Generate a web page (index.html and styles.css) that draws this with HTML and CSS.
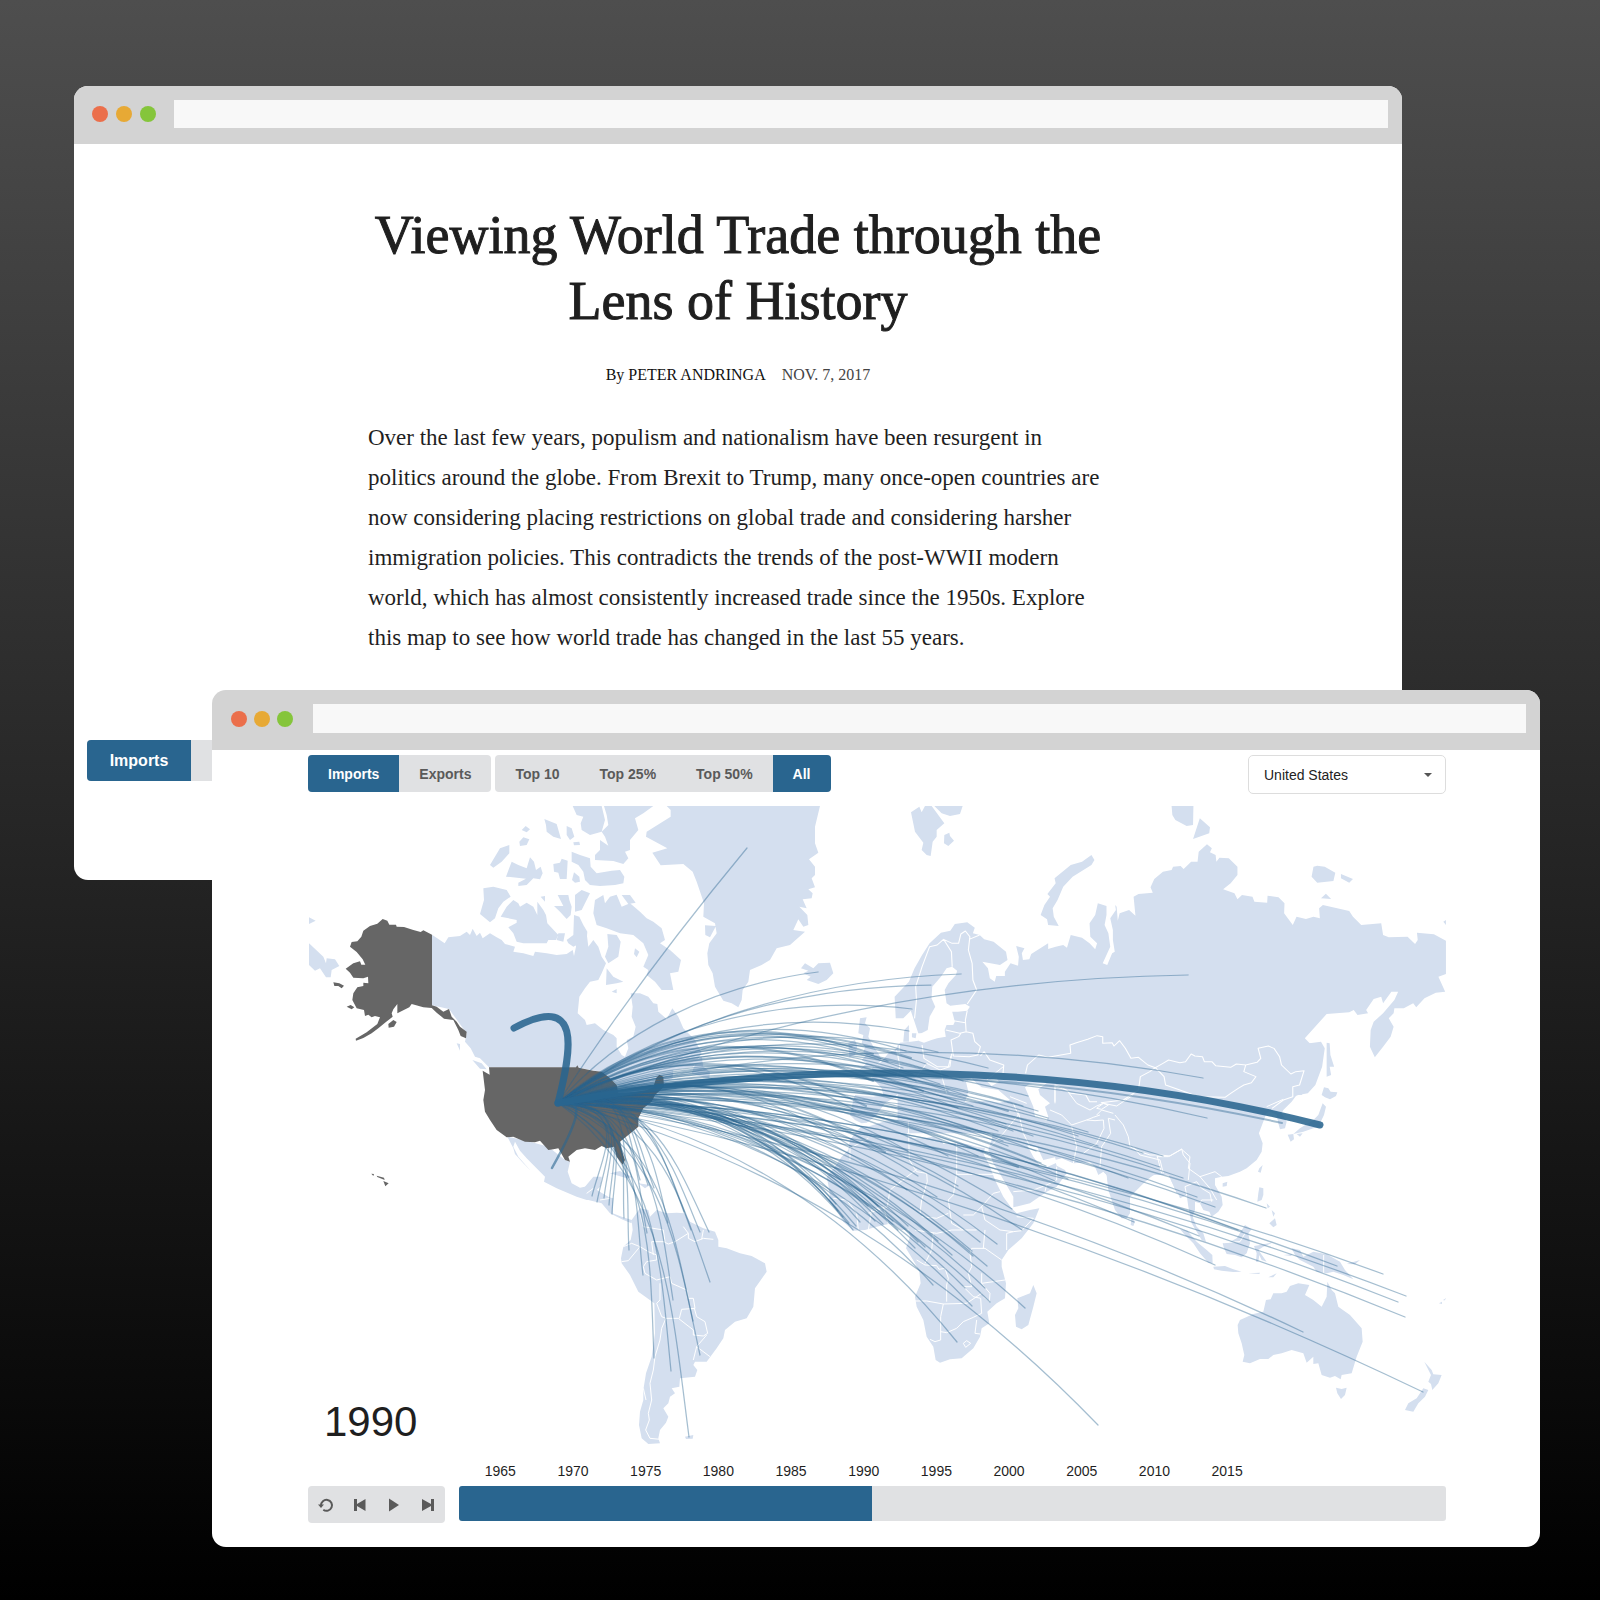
FILE: index.html
```html
<!DOCTYPE html>
<html lang="en">
<head>
<meta charset="utf-8">
<meta name="viewport" content="width=device-width, initial-scale=1">
<title>Viewing World Trade through the Lens of History</title>
<link rel="stylesheet" href="styles.css">
</head>
<body>
<main class="desktop">

  <section class="window window-article">
    <div class="chrome">
      <div class="dots"><span class="dot red"></span><span class="dot amber"></span><span class="dot green"></span></div>
      <input class="address" type="text" aria-label="Address">
    </div>
    <article class="article">
      <h1>Viewing World Trade through the Lens of History</h1>
      <p class="byline"><span class="author">By PETER ANDRINGA</span><time datetime="2017-11-07">NOV. 7, 2017</time></p>
      <p class="intro">Over the last few years, populism and nationalism have been resurgent in<br>politics around the globe. From Brexit to Trump, many once-open countries are<br>now considering placing restrictions on global trade and considering harsher<br>immigration policies. This contradicts the trends of the post-WWII modern<br>world, which has almost consistently increased trade since the 1950s. Explore<br>this map to see how world trade has changed in the last 55 years.</p>
    </article>
    <div class="segmented large">
      <button class="active" type="button">Imports</button><button type="button" aria-label="Exports"></button>
    </div>
  </section>

  <section class="window window-map">
    <div class="chrome chrome-map">
      <div class="dots"><span class="dot red"></span><span class="dot amber"></span><span class="dot green"></span></div>
      <input class="address" type="text" aria-label="Address">
    </div>
    <div class="explorer">
      <div class="toolbar">
        <div class="segmented">
          <button class="active" type="button">Imports</button><button type="button">Exports</button>
        </div>
        <div class="segmented">
          <button type="button">Top 10</button><button type="button">Top 25%</button><button type="button">Top 50%</button><button class="active" type="button">All</button>
        </div>
        <div class="country">
          <select aria-label="Country"><option>United States</option></select>
        </div>
      </div>

      <div class="map">
        <svg viewBox="0 0 1138 638" role="img" aria-label="World trade routes">
          <g transform="scale(.33333)">
            <!-- Russia, Scandinavia, Arctic Asia -->
            <g transform="translate(1656 -18) scale(1.129 1)">
              <path class="land" d="M95,655 92,590 130,545 145,505 165,465 185,430 215,398 240,392 252,372 285,367 305,383 300,400 318,405 330,418 355,425 388,455 392,480 372,495 325,485 340,505 345,535 358,545 362,528 385,528 385,515 400,490 420,497 422,470 415,438 437,445 430,460 433,480 450,478 455,462 500,430 500,447 520,440 540,435 550,443 560,405 590,413 610,430 625,448 630,430 612,410 610,370 625,345 632,310 655,318 655,345 650,375 660,400 665,440 645,490 657,495 670,460 677,455 672,420 672,390 665,355 680,330 678,315 682,320 685,362 690,340 715,330 732,347 727,290 740,282 778,278 772,262 782,237 805,215 828,210 832,200 852,198 860,207 880,185 897,185 900,155 922,133 935,145 930,157 945,165 947,185 955,173 980,175 1003,200 1003,225 985,250 965,268 995,280 1003,298 1015,285 1043,290 1048,305 1082,308 1083,287 1112,292 1128,310 1127,340 1150,375 1160,350 1185,357 1205,350 1222,355 1220,325 1230,315 1300,333 1310,350 1332,375 1385,370 1390,405 1405,412 1455,410 1475,432 1482,420 1480,398 1525,403 1557,422 1557,522 1537,530 1555,575 1530,578 1500,595 1478,622 1470,610 1445,625 1420,625 1418,640 1405,655 1418,680 1410,710 1390,740 1368,772 1355,740 1357,690 1365,665 1390,640 1420,600 1430,575 1412,575 1390,610 1385,590 1365,597 1345,630 1350,640 1322,645 1312,630 1300,637 1240,642 1182,715 1195,730 1225,725 1235,745 1228,800 1210,855 1190,880 1165,885 1150,890 1130,905 1100,925 1080,940 1060,1000 100,1000 100,735 135,725 155,722 165,700 155,700 135,632 115,655z"/>
              <path class="land" d="M480,345 490,315 505,290 498,282 520,250 517,235 560,195 590,185 615,165 623,180 615,195 565,230 540,260 525,300 512,325 515,350 528,378 500,375 497,358zM828,18H886L885,75 868,78 838,60 830,45zM903,55 930,82 928,100 885,117zM1200,230 1205,200 1215,197 1235,200 1263,218 1258,243 1215,248zM1278,222 1310,237 1300,248 1278,235zM1225,295 1238,281 1252,297zM1550,365 1557,360V375zM1240,728 1248,730 1250,765 1260,800 1248,800 1252,825 1240,830 1240,790zM118,690 130,675 130,725 115,725zM138,700 150,700 148,715 138,712z"/>
              <path class="sea" d="M158,703 180,690 185,650 200,620 190,595 192,560 215,530 230,505 245,500 258,512 255,525 235,550 225,570 230,610 240,617 280,612 292,620 285,632 260,635 245,635 252,665 248,675 230,675 225,690 228,710 205,715 190,720 170,728 155,722z"/>
            </g>
            <!-- Europe, Middle East, India, Africa -->
            <g transform="translate(1476 582)">
              <path class="land" d="M330,125 300,128 285,150 265,160 245,185 215,205 225,225 215,232 245,265 250,285 220,290 165,285 160,300 150,345 165,360 185,370 200,368 225,350 240,330 255,310 280,295 300,275 330,278 345,262 360,300 375,310 400,340 395,355 415,345 420,325 385,295 360,265 350,250 370,245 380,265 430,310 440,340 455,375 470,370 465,345 480,335 495,345 490,365 510,378 555,378 580,380 575,420 565,450 580,490 605,530 640,590 640,622 690,610 740,575 770,560 800,520 795,510 770,497 765,480 785,475 820,490 870,487 885,500 895,525 910,515 920,525 925,570 945,630 965,655 980,655 990,640 990,590 1030,550 1060,525 1090,525 1110,520 1115,545 1130,580 1165,580 1200,560V135H345zM180,55 200,52 195,70 210,85 205,110 220,140 235,160 245,180 225,200 190,205 178,210 200,190 185,180 200,165 190,160 195,140 185,130 190,105 175,100zM145,130 165,120 172,140 165,165 148,172zM375,350 395,352 390,362zM305,305H316V332H305z"/>
              <path class="land" d="M185,378 165,400 150,420 145,450 125,470 105,500 80,530 85,555 90,590 85,600 105,625 130,665 160,692 195,690 230,680 265,672 285,675 305,690 325,688 330,710 318,745 345,790 358,815 362,850 345,890 350,920 370,960 380,1010 400,1040 407,1080 420,1088 450,1078 485,1075 520,1045 540,1010 545,985 568,970 562,935 590,910 615,895 618,850 605,800 605,780 625,750 665,715 700,670 718,625 690,630 650,640 635,625 610,590 585,540 570,500 550,460 555,445 530,440 500,432 470,428 430,432 425,420 400,410 370,415 340,415 320,405 325,380 330,360 300,358 250,365 210,378zM700,855 710,880 700,920 685,975 665,988 648,980 645,945 655,925 652,895 690,880z"/>
              <path class="sea" d="M495,305 505,275 498,245 515,235 530,250 545,262 595,270 630,300 600,308 560,302 530,305zM560,243 590,235 597,245 575,258zM675,262 690,250 740,250 715,268 720,285 750,310 735,320 745,350 740,362 705,350 700,320zM682,437 712,442 730,480 765,472 770,488 740,502 722,500 700,470z"/>
            </g>
            <!-- East Asia and Oceania -->
            <g transform="translate(2376 762)">
              <path class="land" d="M0,-50H655L660,30 645,55 625,80 605,105 590,105 575,125 550,150 545,160 560,185 555,205 540,208 535,190 530,165 500,150 465,160 480,175 465,200 475,215 488,250 485,275 470,300 440,325 420,335 385,348 365,350 345,355 345,375 365,410 368,435 355,455 335,470 328,455 310,450 300,430 285,425 285,450 278,470 290,500 310,520 318,545 305,540 275,490 265,440 260,405 240,415 230,390 215,365 205,345 175,340 150,350 100,400 90,410 90,455 75,475 60,460 30,400 20,345 0,325zM368,370 382,365 380,378 368,380zM478,325 488,315 482,338 474,335zM95,470 105,485 100,498 92,495zM475,400 478,382 490,385 490,405 485,420 472,425zM500,430 510,440 503,445zM508,490 525,475 530,495 520,502zM515,450 525,460 520,470zM672,82 685,85 692,95 712,97 708,108 690,118 675,112 665,105zM668,130 678,140 672,165 660,190 665,200 640,205 610,215 580,222 600,205 640,180 655,165zM563,224 580,222 582,238 572,245zM590,222 608,220 600,230zM240,508 262,512 290,545 320,570 337,585 338,610 325,608 300,580 280,550 255,525zM340,620 375,618 400,628 425,635 400,636 365,632 342,628zM368,550 385,548 410,535 435,495 455,508 445,520 450,550 440,580 425,592 405,585 380,582 372,565zM462,558 480,555 520,547 490,560 475,570 500,605 485,600 478,585 475,605 468,605 470,580zM445,640 480,638 478,642zM505,652 530,640 520,652zM550,585 575,583 574,588zM575,565 600,570 610,590 640,575 680,583 720,605 735,630 760,658 730,645 700,635 680,640 650,635 640,620 600,600 585,585zM740,612 780,600 765,613z"/>
              <path class="land" d="M413,795 420,780 460,762 490,755 498,720 512,718 520,700 545,700 560,695 570,678 595,670 628,675 615,705 640,720 665,740 680,710 682,665 695,690 705,700 715,740 750,765 785,805 788,845 770,890 755,940 725,945 722,958 705,948 690,953 665,945 655,910 640,912 640,890 620,908 610,880 575,870 545,880 520,885 505,897 480,897 450,910 428,905 433,885 425,850 415,820zM708,983 725,987 740,983 735,1005 723,1017 712,1000zM973,905 995,930 1000,943 1025,945 1015,970 997,990 993,972 985,965 993,945zM970,985 985,990 975,1010 955,1030 940,1055 915,1050 925,1030 950,1015zM1017,730 1026,725 1026,732zM1030,719 1040,714 1032,722z"/>
            </g>
            <!-- South and Central America -->
            <g transform="translate(756 582)">
              <path class="land" d="M215,660 240,625 265,630 270,650 290,630 320,640 350,638 375,640 390,665 430,685 465,695 475,720 475,740 500,745 540,760 575,768 615,790 620,815 585,865 580,920 560,955 525,965 495,990 490,1015 470,1045 440,1085 405,1085 400,1095 412,1110 405,1130 360,1135 358,1160 335,1165 345,1180 330,1190 325,1210 310,1225 325,1250 318,1268 300,1290 295,1315 300,1330 265,1332 245,1315 237,1275 240,1235 250,1200 250,1170 258,1120 275,1070 285,1000 283,910 235,875 210,825 185,790 183,775 190,740 212,720 218,690zM375,1310 400,1305 398,1316 378,1317zM60,575 75,560 100,530 125,530 120,560 110,570 140,590 160,595 158,640 185,650 215,660V670L190,660 150,640 125,610 85,600zM150,520 180,513 215,530 205,536 165,524zM235,550 270,555 255,565z"/>
            </g>
            <!-- Greenland, Iceland, Svalbard -->
            <g transform="translate(876 -18)">
              <path class="land" d="M200,18H660L645,80 645,130 655,158 627,178 645,200 645,225 635,235 645,262 625,268 638,280 635,295 608,298 620,325 598,320 622,345 625,375 610,380 595,358 580,390 615,395 570,435 530,445 510,480 485,495 450,510 445,545 428,570 425,600 415,622 395,610 370,602 345,560 338,520 325,495 322,460 328,430 350,400 345,370 310,350 312,310 290,245 278,215 250,192 182,196 157,158 202,145 138,110 140,95 212,50 212,30zM315,376 348,378 330,412 316,405zM603,505 615,490 640,505 655,490 690,488 700,520 680,540 655,552 620,540 632,530 610,520 625,512zM933,37 958,20 965,37 975,18H995L1033,70 1010,90 1010,110 998,125 992,168 980,165 965,150 970,128 945,95zM1003,18H1088L1080,42 1050,48 1025,40zM1033,105 1048,98 1050,108 1062,122 1045,138 1032,130z"/>
            </g>
            <!-- Canada, United States, Mexico -->
            <g transform="translate(-24 -18)">
              <path class="land" d="M27,352 47,362 27,372zM27,430 70,470 78,490 80,475 105,478 118,498 95,510 92,532 78,532 60,505 45,512 27,495z"/>
              <path class="land" d="M396,404 434,430 445,412 480,408 500,395 510,405 518,386 530,408 540,398 548,415 570,400 590,412 605,420 615,432 645,440 640,455 670,460 700,468 705,455 740,460 770,465 800,462 818,450 822,468 828,440 826,420 835,385 860,400 865,440 880,420 895,440 905,470 918,490 905,520 895,540 870,545 855,565 838,590 833,640 855,660 860,675 885,670 910,690 940,705 950,715 950,740 965,765 975,770 985,745 980,720 1000,710 1007,680 995,650 998,620 992,580 1020,580 1045,590 1060,610 1072,612 1075,635 1100,657 1117,625 1135,650 1150,685 1185,720 1205,760 1180,800 1120,810 1118,835 1090,850 1060,862 1000,872 950,855 900,815 830,802H567L540,775 525,770 512,745 495,725 500,700 447,627 396,616zM1175,820 1190,780 1205,770 1210,800 1230,815 1228,835 1210,832zM517,780 545,790 560,808 540,806zM470,730 480,732V752z"/>
              <path class="land" d="M550,265 580,260 620,270 632,290 610,305 595,325 585,355 570,367 540,342 552,300zM602,350 620,320 640,300 655,310 660,320 680,308 700,320 712,345V305L730,330 738,345 742,370 775,405 768,420 745,420 740,430H670L650,425 640,400 625,382 650,368 650,360zM570,195 600,145 628,135V160L605,185 580,203zM618,230 635,185 655,195 680,205 690,172 702,185 708,210 722,200 728,220 720,238 700,235 680,255 655,258 655,248 678,236zM665,90 677,78 690,88 680,97zM658,125 670,112 688,118 680,135 660,138zM733,57 770,72 783,117 760,110 740,95 738,75zM800,78 815,85 823,110 810,120 800,105zM820,127 838,125 840,135 822,136zM760,192 780,188 785,176 803,182 800,237 780,237 775,218 762,215zM822,217 838,230 840,245 825,248 816,240zM815,155 840,165 870,175 872,200 890,220 935,212 960,210 973,230 970,250 945,255 900,258 870,255 855,240 850,215 835,195 815,185zM818,18H905L915,60 905,95 870,105 845,90 842,70 850,50 830,45zM912,18H1060L1030,40 1005,55 1015,90 990,120 990,150 975,155 985,175 970,192 940,183 885,180 885,165 900,150 900,120 925,137 915,110 905,95 925,75 920,45z"/>
              <path class="land" d="M762,318 790,318 773,285 805,285 808,300 815,320 812,345 800,357 780,335zM722,290 735,288V305zM825,285 845,270 870,280 855,310 845,330 825,335zM822,345 838,350 850,375 862,395 860,420 820,440 805,430 800,420 820,405zM775,400 795,400 790,425 770,420zM885,300 910,285 915,310 930,290 950,284 965,320 990,310 1020,335 1040,355 1060,365 1085,385 1095,420 1080,430 1110,450 1143,480 1135,515 1110,520 1120,570 1085,570 1065,545 1040,525 1045,510 1030,500 1045,465 1030,430 1000,405 960,400 920,385 890,375 880,340zM965,285H990L1007,308 985,312zM922,402 950,405 962,425 955,470 925,490 915,470 925,440zM1005,445 1018,455 1010,472 1002,462zM920,505 940,530 970,545 950,550 918,555zM935,575 950,567V580z"/>
              <path class="land" d="M622,1010 680,1022 745,1040 795,1080 810,1085 803,1115 815,1150 840,1163 865,1158 878,1135 905,1132 903,1150 890,1170 925,1190V1200H860L830,1190 770,1165 732,1145 735,1130 700,1095 680,1075 660,1052 645,1025 640,1040 655,1070 692,1112 670,1090 645,1062 640,1045z"/>
              <path class="home" d="M248,357 262,362 268,374 288,374 290,380 312,381 340,390 362,396 370,391 396,404V616L410,620 430,635 447,627 455,650 470,665 480,680 500,695 498,715 482,708 475,690 460,660 432,656 410,638 395,624 370,622 335,612 328,622 292,640 292,612 280,628 275,640 278,650 255,668 235,685 215,700 190,714 168,722 167,716 200,697 232,672 240,652 225,648 215,652 205,644 195,648 192,630 170,625 157,600 160,580 172,562 190,558 190,548 205,550 204,530 190,535 160,533 150,518 137,506 160,490 180,484 184,494 196,494 188,478 170,456 150,440 155,426 172,424 184,410 190,392 210,378 232,371zM100,547 118,550 132,557 125,565 115,558 103,558zM140,620 152,615 163,622 155,628zM265,672 280,660 290,666 282,680 266,683zM214,1121 222,1122 220,1128zM230,1127 252,1133 254,1140 232,1131zM250,1143 266,1150 256,1159z"/>
              <path class="home" d="M567,802H828L832,796 836,803 880,812 905,815 925,830 950,855 955,880 985,880 1040,870 1060,862 1068,835 1078,824 1090,830 1092,860 1065,885 1055,905 1030,925 1015,955 1015,980 985,1005 960,1025 965,1050 975,1080 968,1094 950,1070 942,1040 920,1045 905,1038 885,1050 855,1045 830,1050 805,1070 810,1085 795,1080 775,1045 760,1048 745,1050 720,1022 705,1027 675,1025 640,1010 620,1012 590,990 570,960 555,935 550,900 555,870 548,812 569,824z"/>
            </g>
            <!-- Country borders, above every landmass -->
            <g class="borders">
              <path transform="translate(1656 -18) scale(1.129 1)" d="M145,655 150,600 148,560 165,500 185,440 205,435 222,418 245,430 262,430 268,402 280,393 292,410 288,450 298,490 300,540 310,570 285,612M222,418 243,455 245,500M290,418 318,405M285,632 280,660 282,695 265,700 228,690M248,662 280,668M282,695 300,700 305,725 320,740 313,765 290,770 248,768 242,720 262,710 268,700M242,768 235,800 205,800 170,775 165,735M320,768 330,755 345,780 382,795 380,820M105,735 103,770M440,820 445,795 475,765 500,772 560,760 558,735 575,728 605,718 630,707 645,710 645,730 670,728 675,738 690,722 705,745 720,775 740,772 765,795 785,803 770,815 745,830 740,870 700,900 640,908M518,905V855L540,865 560,880 600,885 610,905 630,905M785,803 805,790 820,780 850,788 865,785 880,762 890,768 910,770 915,785 935,785 945,797 985,802 1000,792 1025,795 1020,815 1052,830 1040,848 1020,855 1005,865 985,880 970,892 900,890 850,870 812,855 808,830zM1025,795 1055,787 1065,775 1058,745 1085,738 1100,745 1115,770 1120,795 1145,822 1158,815 1180,812 1168,855 1150,860 1150,890 1125,900 1095,925"/>
              <path transform="translate(1476 582)" d="M205,415 150,445V480M325,365 328,480 350,515 380,520 382,545 365,600 360,640M470,425V523H580M470,523 460,585 445,600 455,670 490,690 530,690M350,508 270,570 262,620 205,640M365,650 410,655 445,640M490,645 520,645 545,620 555,660 600,690 640,695 665,692 700,655 650,650M545,620 580,580 600,575M345,690 410,700 455,690 490,690M350,780 375,795 410,797 417,808 435,805 445,835 440,855V905M345,903 380,903 430,912 500,910 545,880M430,912 422,950V1020L405,1025 390,1018M422,995 440,998 470,985 490,965 520,952 545,940 542,895 520,890 490,860 515,860 505,820 515,800 510,760 515,745 555,745 605,780M620,750V700L640,695M545,850 580,845 615,840M555,690 550,745M490,1030 500,1022 512,1030 497,1042zM100,595 140,600 170,640 175,690M205,690 215,630 250,620 265,672M530,960 525,1000 540,1002M545,820 545,850 570,880 568,905 550,890M400,700 395,750 375,790M570,440 610,400 655,345M655,335 670,400 690,440M640,575 700,570 740,555 735,575M740,555 770,540V500M765,310V260L800,270 830,310 870,330 890,318 910,310 950,318 1000,285M750,330 785,345 815,375 860,360 880,352 900,345M815,380 830,440 820,490M860,360 885,362 910,360 912,385 890,430 850,460M945,360 925,355 932,400 905,440 900,500M945,345 970,375 985,410 990,440 1020,455 1050,465 1080,465 1110,468 1145,447 1150,465 1170,490 1165,540M1000,440 1020,465 1080,480 1090,520M890,325 910,310 925,315 905,328zM940,340 905,330 890,345M630,290 680,310M640,310 655,345M500,240 440,230M455,160 450,200 420,210 380,190M610,200 560,240M290,150 300,200 290,230M380,190 350,230M420,210 440,280"/>
              <path transform="translate(2376 762)" d="M170,290H205L245,268 270,290 265,325 300,350 345,335 365,350M255,380 290,365 305,385 330,400 335,425M172,290 185,340M300,350 330,385 350,420M671,585V640M372,548 420,545 435,520M260,405 255,380M300,430 305,420H340M500,140 550,118"/>
              <path transform="translate(756 582)" d="M300,850V900L290,910 305,950 318,955 305,985 300,1020 285,1070 280,1110 270,1150 275,1200 265,1240 268,1260 257,1290 270,1315 300,1318M185,785 205,782 240,740 215,730 190,740M240,740 265,755 290,765V780L260,785 250,800 255,820 290,840 330,830 335,850 380,870 385,895 400,895 405,925 365,928 358,955M240,640 250,680 310,690 315,725 275,725 280,765M310,725 325,732 345,725 385,700 370,680M385,700 385,715 405,725 430,715 460,718M318,955 355,955 400,990 400,1005 430,1008 443,1000 435,965 410,950 403,925M400,1080 410,1040 440,1005M410,1040 450,1070M430,690 425,718M80,580 100,565M120,600 150,595M250,1165 258,1200"/>
            </g>
          </g>
          <g id="routes" class="routes"></g>
        </svg>
        <div class="year">1990</div>
      </div>

      <div class="player">
        <div class="controls">
          <button type="button" aria-label="Restart"><svg viewBox="0 0 16 16"><path class="ring" d="M3 8.500a5.500 5.500 0 1 1 2.300 4.300"/><path d="M0 7.500h6l-3 3.500z"/></svg></button>
          <button type="button" aria-label="Previous year"><svg viewBox="0 0 16 16"><path d="M2 2h3v5l8.500-5v12L5 9v5H2z"/></svg></button>
          <button type="button" aria-label="Play"><svg viewBox="0 0 16 16"><path d="M4 1.500L14 8l-10 6.500z"/></svg></button>
          <button type="button" aria-label="Next year"><svg viewBox="0 0 16 16"><path d="M15 2h-3v5L3 2v12l9-5v5h3z"/></svg></button>
        </div>
        <div class="timeline">
          <div class="years"><span>1965</span><span>1970</span><span>1975</span><span>1980</span><span>1985</span><span>1990</span><span>1995</span><span>2000</span><span>2005</span><span>2010</span><span>2015</span></div>
          <input class="scrubber" type="range" min="1962" max="2029" value="1990" aria-label="Year">
        </div>
      </div>
    </div>
  </section>
</main>
<script src="routes.js"></script>
</body>
</html>
```
FILE: styles.css
```css
* { box-sizing: border-box; }

body {
  margin: 0;
  font-family: "Liberation Sans", Arial, sans-serif;
  color: #1f1f1f;
}

button, input, select { font: inherit; border: 0; margin: 0; }

.desktop {
  position: relative;
  min-height: max(100vh, 1600px);
  background: linear-gradient(#4e4e4e, #000);
}

.window {
  position: absolute;
  width: 83%;
  background: #fff;
  border-radius: 14px;
  overflow: hidden;
}
.window-article { left: 74px; top: 86px; padding-bottom: 99px; }
.window-map { left: 212px; top: 690px; padding-bottom: 24px; }

.chrome {
  display: flex;
  align-items: flex-start;
  gap: 18px;
  height: 58px;
  padding: 14px 14px 0 18px;
  background: #d3d3d3;
}
.chrome-map { gap: 20px; height: 60px; padding: 14px 14px 0 19px; }
.dots { display: flex; gap: 8px; padding-top: 6px; }
.dot { width: 16px; height: 16px; border-radius: 50%; }
.red { background: #eb6f4b; }
.amber { background: #e7a935; }
.green { background: #85c53b; }
.address { flex: 1; height: 28px; background: #f8f8f8; }
.chrome-map .dots { gap: 7px; padding-top: 7px; }
.chrome-map .address { height: 29px; }

.article {
  width: 740px;
  max-width: 100%;
  margin: 0 auto;
  padding-top: 58px;
  font-family: "Liberation Serif", "Times New Roman", serif;
}
.article h1 {
  margin: 0;
  font-size: 54px;
  line-height: 66px;
  font-weight: 400;
  text-align: center;
  -webkit-text-stroke: 1px #1f1f1f;
}
.byline {
  display: flex;
  justify-content: center;
  gap: 16px;
  margin: 31px 0 33px;
  font-size: 16px;
  line-height: 20px;
}
.author { color: #111; }
.byline time { color: #444; }
.intro { margin: 0; font-size: 23px; line-height: 40px; white-space: nowrap; }

.segmented {
  display: flex;
  height: 37px;
  border-radius: 4px;
  overflow: hidden;
  background: #e0e1e3;
}
.segmented button {
  padding: 1px 20px 0;
  background: transparent;
  color: #5a5a5a;
  font-size: 14px;
  font-weight: 700;
}
.segmented .active { background: #29658f; color: #fff; }
.segmented.large { width: 208px; height: 41px; margin: 82px 0 0 13px; }
.segmented.large button { flex: 1; font-size: 16px; }

.explorer { padding: 5px 94px 0 96px; }
.toolbar { display: flex; gap: 4px; height: 39px; }
.country { position: relative; width: 198px; margin-left: auto; }
.country select {
  appearance: none;
  width: 100%;
  height: 39px;
  padding: 1px 15px 0;
  background: #fff;
  border: 1px solid #ddd;
  border-radius: 5px;
  color: #222;
  font-size: 14px;
}
.country::after {
  content: "";
  position: absolute;
  right: 14px;
  top: 18px;
  border: 4px solid transparent;
  border-top-color: #555;
}

.map { position: relative; margin-top: 12px; }
.map svg { display: block; width: 100%; }
.land { fill: #d4dfef; }
.sea { fill: #fff; }
.home { fill: #666; }
.borders { fill: none; stroke: #fff; stroke-width: 3; stroke-linejoin: round; }
.routes { fill: none; stroke: #29658f; stroke-linecap: round; }
.year { position: absolute; left: 16px; bottom: -1px; font-size: 42px; line-height: 46px; }

.player { display: flex; align-items: flex-end; gap: 14px; margin-top: 19px; }
.controls {
  display: flex;
  justify-content: space-between;
  width: 137px;
  height: 37px;
  padding: 0 10px;
  border-radius: 4px;
  background: #e0e1e3;
}
.controls button { display: flex; align-items: center; padding: 0; background: none; }
.controls svg { width: 16px; height: 16px; fill: #5a5a5a; }
.controls .ring { fill: none; stroke: #5a5a5a; stroke-width: 2; }
.timeline { flex: 1; padding-bottom: 2px; }
.years {
  display: grid;
  grid-template-columns: repeat(11, 1fr);
  width: 81%;
  margin: 0 0 7px 5px;
  font-size: 14px;
  line-height: 16px;
  text-align: center;
}
.scrubber {
  appearance: none;
  display: block;
  width: 100%;
  height: 35px;
  border-radius: 3px;
  background: linear-gradient(90deg, #29658f 41.8%, #e0e1e3 41.8%);
}
.scrubber::-webkit-slider-thumb { appearance: none; width: 1px; height: 35px; background: transparent; }
```
FILE: routes.js
```js
// Trade routes into the United States, in map units.
const HOME = [250, 297];

// Each group: how far its curves bow, how much of the bow falls near home,
// and [x, y, width] of every partner.
const GROUPS = [
  { bow: 6, ends: [[439, 42]] },
  { bow: 36, ends: [[510, 166]] },
  { bow: 42, ends: [[653, 168], [623, 179], [880, 169]] },
  { bow: 50, ends: [[604, 203], [601, 225], [630, 246], [544, 241], [895, 272]] },
  { bow: 60, ends: [[603, 252, 2], [565, 248, 2], [618, 258], [595, 262], [580, 255], [565, 275, 2], [608, 275], [598, 245]] },
  { bow: 54, ends: [[625, 265], [640, 270], [655, 275], [680, 262], [615, 285, 2], [605, 268], [632, 278], [640, 285], [545, 303], [558, 300, 2], [660, 290], [650, 302]] },
  { bow: 48, ends: [[899, 312], [974, 317, 2], [700, 305, 2], [690, 325], [695, 335], [705, 325], [698, 318], [725, 330], [770, 330], [780, 326], [790, 340], [715, 300], [730, 305], [720, 290], [700, 340], [665, 300], [648, 295], [740, 312]] },
  { bow: 48, ends: [[710, 361, 2], [733, 357], [728, 345], [760, 373], [747, 375], [738, 360], [835, 347], [855, 350], [852, 361], [875, 372], [889, 391], [907, 401], [958, 402], [820, 372]] },
  { bow: 44, ends: [[934, 425], [891, 430], [907, 459], [826, 416], [1029, 460], [1075, 468], [1098, 490], [1090, 496], [1097, 511], [930, 424]] },
  { bow: 40, ends: [[995, 526], [1115, 586]] },
  { bow: 60, ends: [[790, 619], [649, 536], [625, 479], [657, 482], [664, 500], [682, 496], [677, 482], [717, 502]] },
  { bow: 60, ends: [[679, 460], [665, 450], [664, 445], [644, 449], [689, 438], [672, 436], [714, 424], [704, 403], [607, 442], [617, 441], [610, 436], [600, 420], [590, 424], [630, 435]] },
  { bow: 50, ends: [[599, 384], [629, 391], [577, 346, 2], [544, 341], [610, 370], [650, 380], [600, 345], [670, 350], [640, 350]] },
  { bow: 60, ends: [[545, 424], [535, 411], [552, 416], [575, 418], [567, 415], [548, 420], [541, 417], [530, 405], [528, 398], [560, 400], [585, 415], [570, 400]] },
  { bow: 46, skew: 0.5, ends: [[284, 390], [289, 396], [296, 392], [301, 399], [304, 408], [316, 412], [320, 371], [332, 374], [340, 379], [346, 382], [321, 444], [339, 427], [335, 469]] },
  { bow: 52, skew: 0.4, ends: [[360, 417], [376, 406], [383, 424], [392, 426], [401, 426], [402, 476], [365, 494], [385, 515], [392, 549], [346, 552], [363, 565], [381, 631]] },
];

const routes = document.getElementById("routes");

function draw(d, width, opacity) {
  const path = document.createElementNS("http://www.w3.org/2000/svg", "path");
  path.setAttribute("d", d);
  path.setAttribute("stroke-width", width);
  path.setAttribute("stroke-opacity", opacity);
  routes.appendChild(path);
}

for (const { bow, skew = 0, ends } of GROUPS) {
  for (const [x, y, width = 1.25] of ends) {
    const dx = x - HOME[0];
    const dy = y - HOME[1];
    const length = Math.hypot(dx, dy);
    const nx = (dy / length) * bow;
    const ny = (-dx / length) * bow;
    const near = 1 + skew;
    const far = 1 - skew;
    const c1 = [HOME[0] + dx * 0.3 + nx * near, HOME[1] + dy * 0.3 + ny * near];
    const c2 = [HOME[0] + dx * 0.65 + nx * far, HOME[1] + dy * 0.65 + ny * far];
    draw(`M${HOME}C${c1} ${c2} ${x},${y}`, width, 0.42);
  }
}

// Mexico, Canada and Japan are the largest partners.
draw("M250,297C278,292 272,312 244,362", 2.5, 0.6);
draw("M250,297C264,242 274,186 206,222", 7, 0.88);
draw("M250,297C480,254 760,254 1012,319", 7, 0.88);
```
